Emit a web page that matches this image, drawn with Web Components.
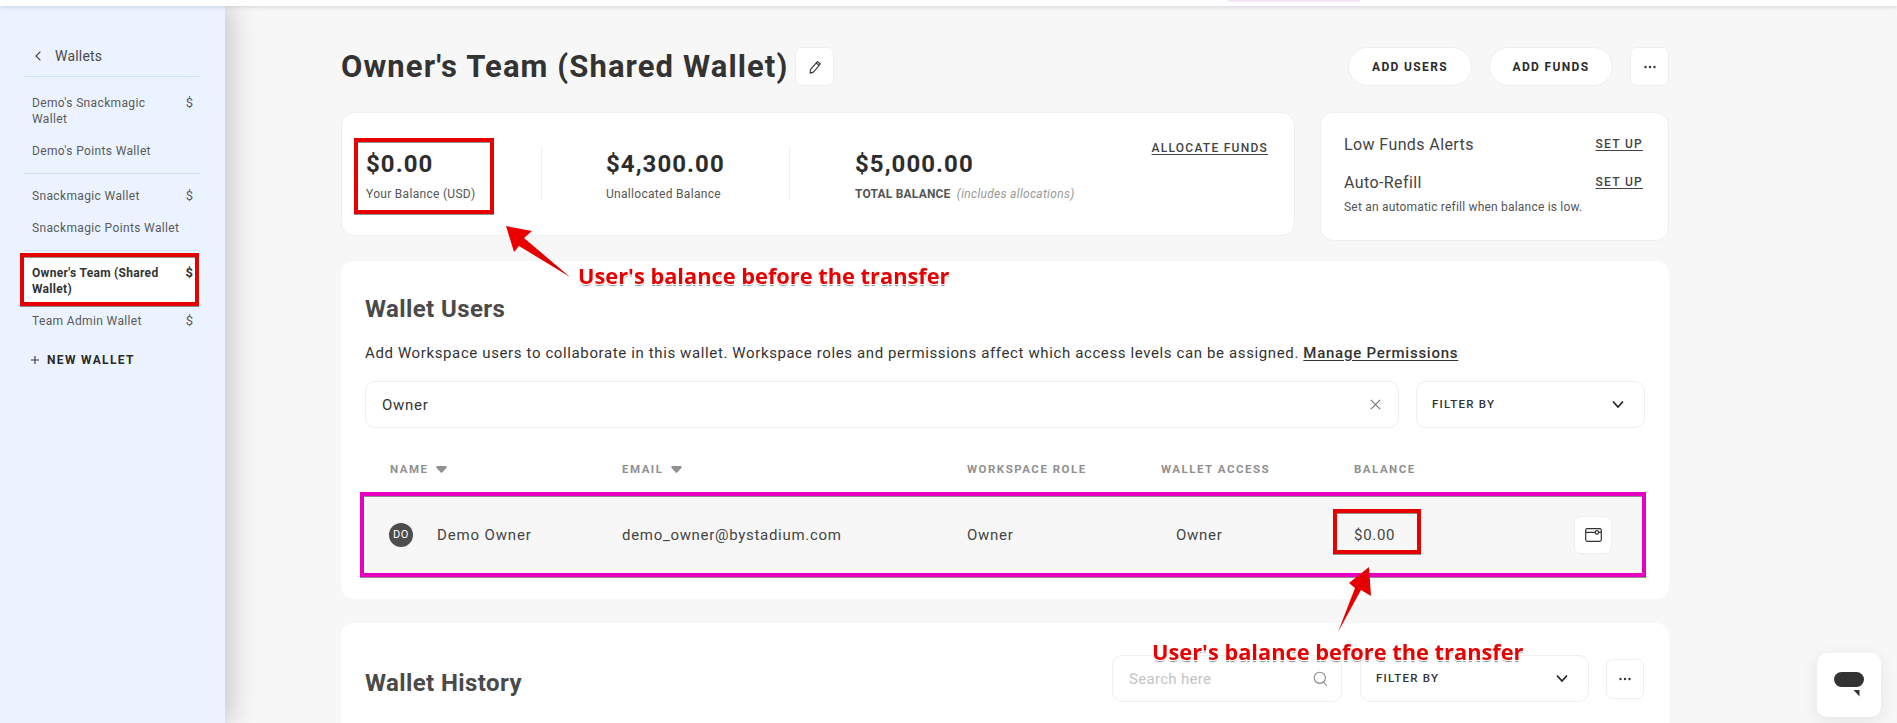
<!DOCTYPE html>
<html lang="en">
<head>
<meta charset="utf-8">
<title>Owner's Team (Shared Wallet)</title>
<style>
    html, body { margin: 0; height: 723px; overflow: hidden; background: #f7f7f7; }
    body { font-family: Roboto, "Liberation Sans", sans-serif; color: #333; }
</style>
</head>
<body>
<wallet-app>
    <wallet-nav slot="nav">
        <nav-group first>
            <nav-item currency>Demo's Snackmagic Wallet</nav-item>
            <nav-item>Demo's Points Wallet</nav-item>
        </nav-group>
        <nav-group>
            <nav-item currency>Snackmagic Wallet</nav-item>
            <nav-item>Snackmagic Points Wallet</nav-item>
        </nav-group>
        <nav-group last>
            <nav-item currency active>Owner's Team (Shared Wallet)</nav-item>
            <nav-item currency>Team Admin Wallet</nav-item>
        </nav-group>
    </wallet-nav>

    <page-head>Owner's Team (Shared Wallet)</page-head>

    <div class="summary" slot="summary">
        <stats-card></stats-card>
        <alerts-card></alerts-card>
    </div>

    <users-card slot="users"></users-card>
    <history-card slot="history"></history-card>
</wallet-app>

<annotation-layer></annotation-layer>
<chat-launcher></chat-launcher>

<script>
const ICONS = {
    dots: '<svg width="14" height="4" viewBox="0 0 14 4"><circle cx="2.5" cy="2" r="1.2"/><circle cx="7" cy="2" r="1.2"/><circle cx="11.5" cy="2" r="1.2"/></svg>',
    chevron: '<svg width="14" height="9" viewBox="0 0 14 9" fill="none" stroke="#222" stroke-width="1.7"><path d="M2 1.5l5 5.5 5-5.5"/></svg>',
    caret: '<svg width="11" height="7" viewBox="0 0 12 8"><path d="M1.5 0h9c1.2 0 1.8 1.2 1.1 2.2L6.8 7.5c-.4.5-1.2.5-1.6 0L.4 2.2C-.3 1.2.3 0 1.5 0z" fill="#919191"/></svg>',
    pencil: '<svg width="14" height="14" viewBox="0 0 14 14" fill="none" stroke="#333" stroke-width="1.1" stroke-linejoin="round"><path d="M9.4 1.6l2.9 2.4-6.9 8.1-3.3 1 .3-3.4z"/><path d="M8.2 3l2.9 2.4"/></svg>',
    close: '<svg width="11" height="11" viewBox="0 0 11 11" fill="none" stroke="#777" stroke-width="1.2"><path d="M.8.8l9.4 9.4M10.2.8L.8 10.2"/></svg>',
    search: '<svg width="15" height="16" viewBox="0 0 15 16" fill="none" stroke="#888" stroke-width="1.1"><circle cx="6.8" cy="6.8" r="5.6"/><path d="M10.8 11l3 4"/></svg>',
    wallet: '<svg width="17" height="14" viewBox="0 0 17 14" fill="none" stroke="#333" stroke-width="1.2"><rect x=".7" y=".7" width="15.6" height="12.6" rx="1.5"/><path d="M.7 4.4h9.4M13.6 4.4h2.7"/><circle cx="11.9" cy="4.4" r="1.7"/></svg>'
};

const define = (name, css, html, setup) => {
    const template = document.createElement('template');
    template.innerHTML = `<style>${css}</style>${html}`;
    customElements.define(name, class extends HTMLElement {
        constructor() {
            super();
            this.attachShadow({ mode: 'open' });
            this.shadowRoot.appendChild(template.content.cloneNode(true));
        }
        connectedCallback() {
            if (setup) setup(this.shadowRoot, this);
        }
    });
};

define('wallet-app', `
    :host { display: flex; flex-direction: column; height: 723px; overflow: hidden; position: relative; }
    .topbar { height: 6px; background: #fff; box-shadow: 0 1px 4px rgba(90,80,120,.22); position: relative; z-index: 2; flex: none; }
    .topbar i { position: absolute; left: 1228px; top: 0; width: 132px; height: 2px; background: #f3e6fa; border-radius: 0 0 12px 12px; }
    .body { display: flex; flex: 1; min-height: 0; }
    main { flex: 1; min-width: 0; padding: 41px 0 0 116px; }
    .column { width: 1328px; display: flex; flex-direction: column; }
    ::slotted(.summary) { display: flex; align-items: flex-start; gap: 25px; margin-top: 26px; }
    ::slotted(users-card) { margin-top: 20px; }
    ::slotted(history-card) { margin-top: 24px; }
`, `
    <div class="topbar"><i></i></div>
    <div class="body">
        <slot name="nav"></slot>
        <main><div class="column">
            <slot></slot>
            <slot name="summary"></slot>
            <slot name="users"></slot>
            <slot name="history"></slot>
        </div></main>
    </div>
`);

define('wallet-nav', `
    :host { display: block; width: 225px; flex: none; box-sizing: border-box; padding: 40px 24px 0; background: #eaf3ff; box-shadow: 6px 0 26px rgba(0,0,0,.2); position: relative; z-index: 1; }
    .back { display: flex; align-items: center; height: 20px; padding: 0 0 10px 11px; border-bottom: 1px solid #cfe3fb; font-size: 14px; letter-spacing: .2px; color: #4a4a4a; }
    .back svg { margin-right: 14px; }
    .add { display: flex; align-items: center; margin: 14px 0 0 7px; height: 18px; font-size: 12px; font-weight: 700; letter-spacing: 1.35px; color: #2b2b2b; }
    .add svg { margin-right: 8px; }
`, `
    <div class="back"><svg width="6" height="10" viewBox="0 0 6 10" fill="none" stroke="#444" stroke-width="1.2"><path d="M5.4.6L1 5l4.4 4.4"/></svg>Wallets</div>
    <slot></slot>
    <div class="add"><svg width="8" height="8" viewBox="0 0 8 8" stroke="#333" stroke-width="1.1"><path d="M4 0v8M0 4h8"/></svg>NEW WALLET</div>
`);

define('nav-group', `
    :host { display: block; padding: 6px 0; border-bottom: 1px solid #cfe3fb; }
    :host([first]) { padding-top: 10px; }
    :host([last]) { padding-bottom: 0; border-bottom: 0; }
`, `<slot></slot>`);

define('nav-item', `
    :host { display: flex; justify-content: space-between; gap: 8px; padding: 8px; font-size: 12px; line-height: 16px; letter-spacing: .36px; color: #5a5a5a; }
    :host([active]) { background: #fff; color: #333; font-weight: 700; letter-spacing: .3px; }
    .label { flex: 1; }
    .cur { font-size: 13px; letter-spacing: 0; margin-left: -1px; }
    .cur:empty { display: none; }
`, `<span class="label"><slot></slot></span><span class="cur"></span>`,
(root, host) => {
    if (host.hasAttribute('currency')) root.querySelector('.cur').textContent = '$';
});

define('pill-button', `
    :host { display: flex; align-items: center; justify-content: center; box-sizing: border-box; width: 124px; height: 39px; background: #fff; border: 1px solid #eee; border-radius: 20px; font-size: 12px; font-weight: 700; letter-spacing: 1.35px; color: #2b2b2b; }
`, `<slot></slot>`);

define('icon-button', `
    :host { display: flex; align-items: center; justify-content: center; box-sizing: border-box; width: 39px; height: 39px; flex: none; background: #fff; border: 1px solid #eee; border-radius: 7px; fill: #333; }
    svg { display: block; }
`, `<slot></slot>`, (root, host) => {
    const icon = ICONS[host.getAttribute('icon')];
    if (icon) host.innerHTML = icon;
});

define('page-head', `
    :host { display: flex; align-items: center; height: 39px; }
    h1 { margin: 0; font-size: 31px; line-height: 39px; font-weight: 700; letter-spacing: 1.1px; color: #333; white-space: nowrap; }
    .edit { margin-left: 7px; }
    .actions { margin-left: auto; display: flex; gap: 17px; }
`, `
    <h1><slot></slot></h1>
    <icon-button class="edit" icon="pencil"></icon-button>
    <div class="actions">
        <pill-button>ADD USERS</pill-button>
        <pill-button>ADD FUNDS</pill-button>
        <icon-button icon="dots"></icon-button>
    </div>
`);

define('stat-block', `
    :host { display: block; box-sizing: border-box; height: 54px; }
    :host([divider]) { border-right: 1px solid #eee; }
    .value { padding-top: 2px; font-size: 24px; line-height: 30px; font-weight: 700; letter-spacing: 1.05px; color: #2d2d2d; }
    .label { margin-top: 7px; font-size: 12px; line-height: 16px; letter-spacing: .3px; color: #555; white-space: nowrap; }
    ::slotted(b) { letter-spacing: .2px; }
    ::slotted(em) { color: #999; margin-left: 3px; }
`, `<div class="value"></div><div class="label"><slot></slot></div>`,
(root, host) => { root.querySelector('.value').textContent = host.getAttribute('value'); });

define('stats-card', `
    :host { display: flex; box-sizing: border-box; width: 954px; height: 124px; padding: 27px 26px 0 24px; background: #fff; border: 1px solid #eee; border-radius: 13px; }
    .stats { display: flex; margin-top: 7px; }
    .one { width: 176px; }
    .two { width: 248px; padding-left: 64px; }
    .three { padding-left: 65px; }
    .link { margin-left: auto; font-size: 12px; line-height: 16px; font-weight: 500; letter-spacing: 1.25px; text-decoration: underline; text-underline-offset: 2px; color: #444; }
`, `
    <div class="stats">
        <stat-block class="one" divider value="$0.00">Your Balance (USD)</stat-block>
        <stat-block class="two" divider value="$4,300.00">Unallocated Balance</stat-block>
        <stat-block class="three" value="$5,000.00"><b>TOTAL BALANCE</b> <em>(includes allocations)</em></stat-block>
    </div>
    <span class="link">ALLOCATE FUNDS</span>
`);

define('alerts-card', `
    :host { display: block; box-sizing: border-box; width: 349px; height: 129px; padding: 22px 25px 0 23px; background: #fff; border: 1px solid #eee; border-radius: 13px; color: #444; }
    .row { display: flex; justify-content: space-between; font-size: 16px; line-height: 20px; letter-spacing: .4px; }
    .row + .row { margin-top: 18px; }
    .row span { font-size: 12px; font-weight: 500; letter-spacing: 1.3px; line-height: 18px; text-decoration: underline; text-underline-offset: 2px; }
    p { margin: 6px 0 0; font-size: 12px; line-height: 16px; letter-spacing: .2px; color: #555; }
`, `
    <div class="row">Low Funds Alerts<span>SET UP</span></div>
    <div class="row">Auto-Refill<span>SET UP</span></div>
    <p>Set an automatic refill when balance is low.</p>
`);

define('field-box', `
    :host { display: flex; align-items: center; justify-content: space-between; box-sizing: border-box; height: 47px; padding: 0 17px 0 16px; background: #fff; border: 1px solid #eee; border-radius: 10px; font-size: 15px; letter-spacing: .7px; color: #333; }
    :host([filter]) { font-size: 11.5px; font-weight: 500; letter-spacing: 1.25px; padding-left: 15px; padding-right: 19px; padding-bottom: 2px; }
    :host([filter]) .icon { margin-top: 2px; }
    :host([placeholder]) { color: #c4c4c4; padding-right: 13px; letter-spacing: .3px; }
    svg { display: block; }
`, `<slot></slot><span class="icon"></span>`,
(root, host) => { root.querySelector('.icon').innerHTML = ICONS[host.getAttribute('icon')] || ''; });

define('users-card', `
    :host { display: block; box-sizing: border-box; height: 338px; padding: 34px 24px 0; background: #fff; border-radius: 13px; --cols: 232px 345px 194px 193px 100px 1fr; }
    h2 { margin: 0; font-size: 24px; line-height: 28px; font-weight: 700; letter-spacing: .4px; color: #4a4a4a; }
    p { margin: 20px 0 0; font-size: 15px; line-height: 20px; letter-spacing: .62px; color: #333; white-space: nowrap; }
    p u { font-weight: 500; letter-spacing: .75px; text-underline-offset: 2px; }
    .filters { display: grid; grid-template-columns: 1034px 229px; gap: 17px; margin-top: 18px; }
    .thead, .row { display: grid; grid-template-columns: var(--cols); align-items: center; padding-left: 25px; }
    .thead { height: 20px; margin-top: 31px; font-size: 11.5px; font-weight: 700; letter-spacing: 1.5px; color: #909090; }
    .thead span { display: flex; align-items: center; gap: 8px; }
    .row { height: 77px; margin-top: 17px; background: #f7f7f7; font-size: 15px; letter-spacing: .7px; color: #444; }
    .name { display: flex; align-items: center; gap: 24px; margin-left: -1px; letter-spacing: .85px; }
    .avatar { display: grid; place-items: center; width: 24px; height: 24px; border-radius: 50%; background: #4d4d4d; color: #fff; font-size: 11px; letter-spacing: .5px; }
    .access { padding-left: 15px; }
    .action { display: flex; justify-content: flex-end; padding-right: 33px; }
    .action icon-button { width: 38px; height: 38px; }
`, `
    <h2>Wallet Users</h2>
    <p>Add Workspace users to collaborate in this wallet. Workspace roles and permissions affect which access levels can be assigned. <u>Manage Permissions</u></p>
    <div class="filters">
        <field-box icon="close">Owner</field-box>
        <field-box filter icon="chevron">FILTER BY</field-box>
    </div>
    <div class="thead">
        <span>NAME ${ICONS.caret}</span>
        <span>EMAIL ${ICONS.caret}</span>
        <span>WORKSPACE ROLE</span>
        <span>WALLET ACCESS</span>
        <span>BALANCE</span>
    </div>
    <div class="row">
        <div class="name"><span class="avatar">DO</span>Demo Owner</div>
        <div>demo_owner@bystadium.com</div>
        <div>Owner</div>
        <div class="access">Owner</div>
        <div>$0.00</div>
        <div class="action"><icon-button icon="wallet"></icon-button></div>
    </div>
`);

define('history-card', `
    :host { display: flex; align-items: flex-start; box-sizing: border-box; height: 120px; padding: 32px 25px 0 24px; background: #fff; border-radius: 13px; }
    h2 { margin: 14px 0 0; font-size: 24px; line-height: 28px; font-weight: 700; letter-spacing: .4px; color: #4a4a4a; }
    .tools { margin-left: auto; display: flex; align-items: center; }
    .search { width: 230px; margin-right: 18px; }
    .filter { width: 229px; margin-right: 17px; }
    icon-button { width: 38px; height: 40px; }
`, `
    <h2>Wallet History</h2>
    <div class="tools">
        <field-box class="search" placeholder icon="search">Search here</field-box>
        <field-box class="filter" filter icon="chevron">FILTER BY</field-box>
        <icon-button icon="dots"></icon-button>
    </div>
`);

define('chat-launcher', `
    :host { position: fixed; left: 1817px; top: 653px; width: 64px; height: 64px; display: grid; place-items: center; background: #fff; border-radius: 10px; box-shadow: 0 4px 18px rgba(0,0,0,.08); }
`, `<svg width="32" height="26" viewBox="0 0 32 26"><rect x="1" y="0" width="30" height="15" rx="7.5" fill="#333"/><path d="M20.5 18h6v6.5z" fill="#333"/></svg>`);

// screenshot markup: boxes, arrows and captions drawn over the page
define('annotation-layer', `
    :host { position: fixed; inset: 0; z-index: 5; pointer-events: none; }
    .box { position: absolute; box-sizing: border-box; border: 4px solid #e60000; box-shadow: 0 1px 0 rgba(70,70,70,.6), inset 0 1px 0 rgba(70,70,70,.6); }
    .pink { border-color: #e600c0; }
    svg { position: absolute; left: 0; top: 0; }
    .note { position: absolute; font-family: "Open Sans", sans-serif; font-weight: 700; font-size: 21.8px; line-height: 28px; white-space: nowrap; color: #e60000;
        text-shadow: 1px 1px 0 #fff, -1px -1px 0 #fff, 1px -1px 0 #fff, -1px 1px 0 #fff, 0 2px 1px #888; }
`, `
    <div class="box" style="left:20px;top:253px;width:179px;height:53px"></div>
    <div class="box" style="left:354px;top:138px;width:140px;height:76px"></div>
    <div class="box pink" style="left:360px;top:492px;width:1286px;height:85px"></div>
    <div class="box" style="left:1333px;top:509px;width:88px;height:45px"></div>
    <svg width="1897" height="723" viewBox="0 0 1897 723">
        <defs><linearGradient id="a" x1="0" y1="0" x2="1" y2="1"><stop offset="0" stop-color="#f00000"/><stop offset="1" stop-color="#d80000"/></linearGradient></defs>
        <path d="M506 226l26 5-8 7 46 39-51-31-5 6z" fill="url(#a)"/>
        <path d="M1369 567l-20 16 6 5-17 44 23-42 10 6z" fill="url(#a)"/>
    </svg>
    <div class="note" style="left:578px;top:262px">User's balance before the transfer</div>
    <div class="note" style="left:1152px;top:638px">User's balance before the transfer</div>
`);
</script>
</body>
</html>
